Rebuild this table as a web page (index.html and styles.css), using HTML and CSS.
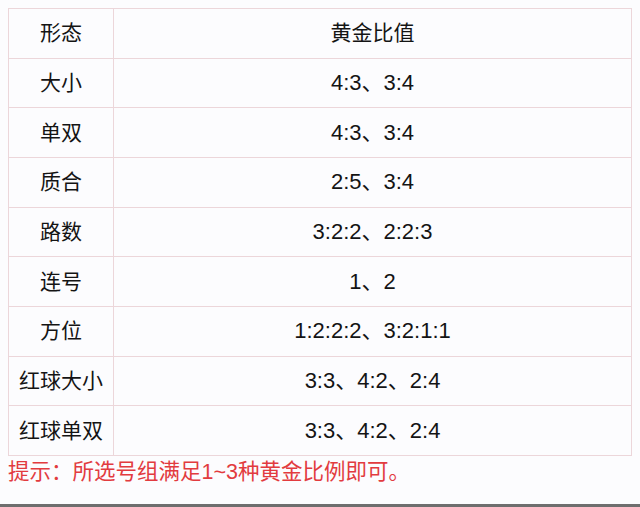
FILE: index.html
```html
<!DOCTYPE html>
<html lang="zh">
<head>
<meta charset="utf-8">
<link rel="stylesheet" href="styles.css">
</head>
<body>
<div class="page">
  <table class="ratio">
    <tr><td class="k">形态</td><td class="v">黄金比值</td></tr>
    <tr><td class="k">大小</td><td class="v n">4:3、3:4</td></tr>
    <tr><td class="k">单双</td><td class="v n">4:3、3:4</td></tr>
    <tr><td class="k">质合</td><td class="v n">2:5、3:4</td></tr>
    <tr><td class="k">路数</td><td class="v n">3:2:2、2:2:3</td></tr>
    <tr><td class="k">连号</td><td class="v n">1、2</td></tr>
    <tr><td class="k">方位</td><td class="v n">1:2:2:2、3:2:1:1</td></tr>
    <tr><td class="k">红球大小</td><td class="v n">3:3、4:2、2:4</td></tr>
    <tr><td class="k">红球单双</td><td class="v n">3:3、4:2、2:4</td></tr>
  </table>
  <p class="tip">提示：所选号组满足1~3种黄金比例即可。</p>
</div>
<div class="bar"></div>
</body>
</html>
```
FILE: styles.css
```css
html, body {
  margin: 0;
  padding: 0;
  background: #fcfcfe;
}
body {
  width: 640px;
  height: 507px;
  display: flex;
  flex-direction: column;
  font-family: "Liberation Sans", "Noto Sans CJK SC", sans-serif;
  color: #141414;
  overflow: hidden;
}
.page {
  flex: 1;
  padding: 8px 8px 0 8px;
}
.ratio {
  width: 624px;
  border-collapse: collapse;
  table-layout: fixed;
}
.ratio td {
  border: 1px solid #ecd6da;
  height: 48.67px;
  padding: 0;
  text-align: center;
  font-size: 21px;
  line-height: 24px;
}
.ratio td.k {
  width: 104px;
}
.ratio td.n {
  font-size: 22px;
}
.tip {
  margin: 1px 0 0 0;
  color: #e23b3f;
  font-size: 21.5px;
  line-height: 30px;
  font-family: "Liberation Sans", "Noto Sans CJK SC", sans-serif;
}
.bar {
  height: 3px;
  background: #6e6e6e;
}
```
